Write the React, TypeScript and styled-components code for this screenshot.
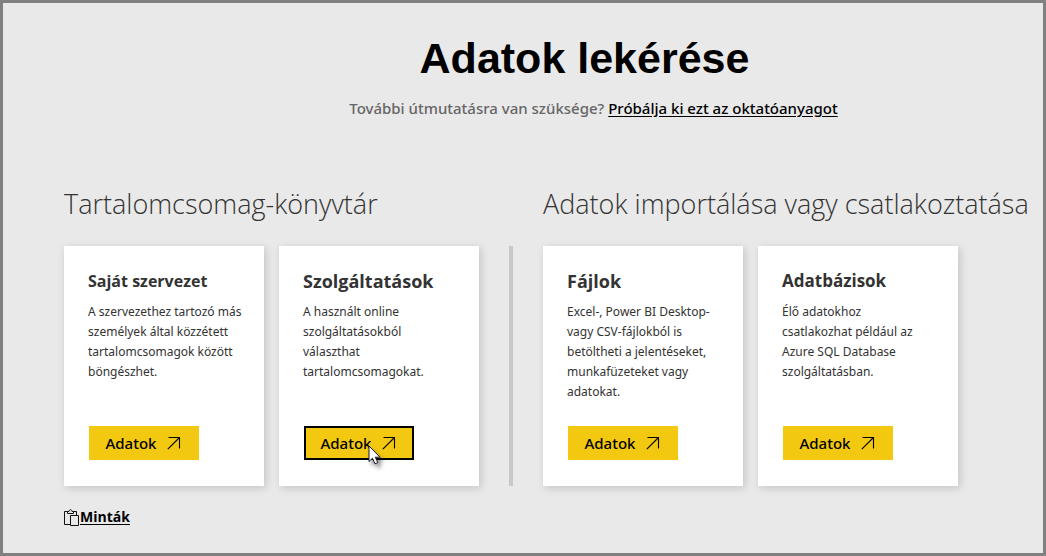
import React from "react";
import styled, { createGlobalStyle } from "styled-components";

const GlobalStyle = createGlobalStyle`
  *, *::before, *::after { box-sizing: border-box; }
  body {
    margin: 0;
    background: #e9e9e9;
    color: #333;
    font-family: "Open Sans", "Noto Sans", sans-serif;
  }
`;

const Page = styled.main`
  min-height: 100vh;
  border: 3px solid #808080;
  background: #e9e9e9;
  padding: 29px 0 16px 61px;
`;

const Header = styled.header`
  padding-left: 80px;
  text-align: center;
`;

const Title = styled.h1`
  margin: 0;
  padding-right: 18px;
  color: #000;
  font: bold 43px/52px "Liberation Sans", Arial, sans-serif;
`;

const Guidance = styled.p`
  margin: 12px 0 0;
  color: #666;
  font-family: "Noto Sans", "Open Sans", sans-serif;
  font-size: 15px;
  font-weight: 500;
  line-height: 24px;
`;

const GuidanceLink = styled.a`
  color: #000;
  text-decoration: underline;
  text-underline-offset: 2px;
`;

const Sections = styled.div`
  display: flex;
  align-items: flex-end;
  gap: 30px;
  margin-top: 64px;
`;

const Section = styled.section`
  flex: none;

  &:last-child {
    flex: 1;
    min-width: 0;
  }
`;

const SectionTitle = styled.h2`
  margin: 0 0 22px;
  font-size: 27px;
  font-weight: 300;
  line-height: 40px;
  white-space: nowrap;
`;

const Cards = styled.div`
  display: flex;
  gap: 15px;
`;

const Divider = styled.div`
  flex: none;
  width: 4px;
  height: 240px;
  background: #c8c8c8;
`;

const Card = styled.article`
  display: flex;
  flex-direction: column;
  align-items: flex-start;
  width: 200px;
  min-height: 240px;
  padding: 23px 12px 26px 24px;
  background: #fff;
  box-shadow: 2px 2px 8px rgba(0, 0, 0, 0.16);
`;

const CardTitle = styled.h3<{ $size: number }>`
  margin: 0;
  font-size: ${(p) => p.$size}px;
  font-weight: 700;
  line-height: 24px;
`;

const CardText = styled.p`
  margin: 9px 0 0;
  font-family: "Noto Sans", "Open Sans", sans-serif;
  font-size: 12px;
  line-height: 20px;
  white-space: pre;
`;

const GetButton = styled.button<{ $focused?: boolean }>`
  position: relative;
  display: flex;
  align-items: center;
  justify-content: center;
  gap: 10px;
  width: 110px;
  height: 34px;
  margin: auto 0 0 1px;
  padding: 0 2px 0 0;
  border: 2px solid ${(p) => (p.$focused ? "#000" : "#f2c811")};
  background: #f2c811;
  color: #000;
  font: 500 15px/20px "Noto Sans", "Open Sans", sans-serif;
  cursor: pointer;
`;

const Pointer = styled.svg`
  position: absolute;
  left: 62px;
  top: 17px;
  overflow: visible;
  filter: drop-shadow(3px 4px 2px rgba(0, 0, 0, 0.45));
`;

const Samples = styled.a`
  display: inline-flex;
  align-items: center;
  margin-top: 20px;
  color: #000;
  font-size: 14px;
  font-weight: 700;
  line-height: 22px;
  text-underline-offset: 2px;
`;

const ArrowIcon = () => (
  <svg width="14" height="14" viewBox="0 0 14 14" fill="none" stroke="#000" strokeWidth="1.1" aria-hidden="true">
    <path d="M1.5 1.5H12.5V12.5M12.5 1.5L.8 13.2" />
  </svg>
);

const ClipboardIcon = () => (
  <svg width="16" height="17" viewBox="0 0 16 17" fill="none" stroke="#111" strokeWidth="1" aria-hidden="true">
    <path d="M6 15.5H.5V2.5H3.5M9.500 2.500H12.500V6M3.500 4.500V2.500H5C5 .2 8 .2 8 2.500H9.500V4.500ZM6.500 6.500H14.500V16.500H6.500Z" />
  </svg>
);

const PointerIcon = () => (
  <Pointer width="13" height="20" viewBox="0 0 13 20" aria-hidden="true">
    <path d="M1 1V16.500L4.500 13.200L7 18.800L9.800 17.600L7.300 12.200H12Z" fill="#fff" stroke="#1c1c30" strokeWidth="1" />
  </Pointer>
);

type Item = { title: string; size: number; text: string; focused?: boolean };

const library: Item[] = [
  {
    title: "Saját szervezet",
    size: 16,
    text: "A szervezethez tartozó más\nszemélyek által közzétett\ntartalomcsomagok között\nböngészhet.",
  },
  {
    title: "Szolgáltatások",
    size: 18,
    text: "A használt online\nszolgáltatásokból\nválaszthat\ntartalomcsomagokat.",
    focused: true,
  },
];

const sources: Item[] = [
  {
    title: "Fájlok",
    size: 18,
    text: "Excel-, Power BI Desktop-\nvagy CSV-fájlokból is\nbetöltheti a jelentéseket,\nmunkafüzeteket vagy\nadatokat.",
  },
  {
    title: "Adatbázisok",
    size: 17,
    text: "Élő adatokhoz\ncsatlakozhat például az\nAzure SQL Database\nszolgáltatásban.",
  },
];

const CardList = ({ items }: { items: Item[] }) => (
  <Cards>
    {items.map((item) => (
      <Card key={item.title}>
        <CardTitle $size={item.size}>{item.title}</CardTitle>
        <CardText>{item.text}</CardText>
        <GetButton type="button" $focused={item.focused}>
          Adatok
          <ArrowIcon />
          {item.focused && <PointerIcon />}
        </GetButton>
      </Card>
    ))}
  </Cards>
);

export default function App() {
  return (
    <Page>
      <GlobalStyle />
      <Header>
        <Title>Adatok lekérése</Title>
        <Guidance>
          További útmutatásra van szüksége?{" "}
          <GuidanceLink href="#tutorial">Próbálja ki ezt az oktatóanyagot</GuidanceLink>
        </Guidance>
      </Header>
      <Sections>
        <Section>
          <SectionTitle>Tartalomcsomag-könyvtár</SectionTitle>
          <CardList items={library} />
        </Section>
        <Divider />
        <Section>
          <SectionTitle>Adatok importálása vagy csatlakoztatása</SectionTitle>
          <CardList items={sources} />
        </Section>
      </Sections>
      <Samples href="#samples">
        <ClipboardIcon />
        Minták
      </Samples>
    </Page>
  );
}
